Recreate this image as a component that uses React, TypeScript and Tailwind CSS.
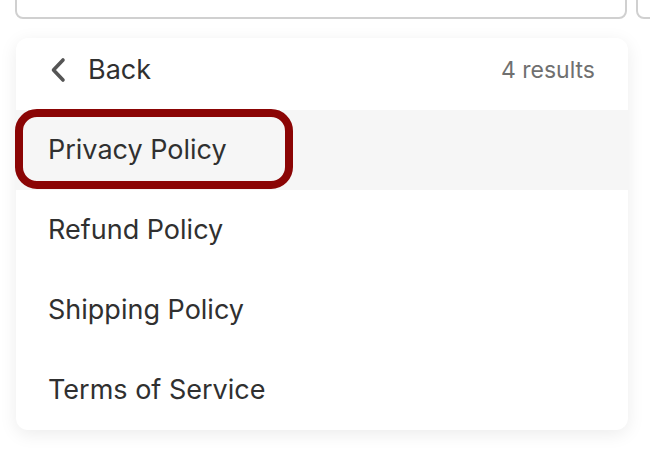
import React from "react";

const items = ["Privacy Policy", "Refund Policy", "Shipping Policy", "Terms of Service"];

export default function App() {
  return (
    <div className="w-[650px] h-[450px] overflow-hidden bg-white font-['Inter','Noto_Sans',sans-serif] text-[#303030]">
      {/* Search inputs, mostly scrolled out of view */}
      <div className="flex gap-[9px] pl-[15px] mt-[-32px]">
        <div className="w-[612px] h-[51px] shrink-0 rounded-[8px] border-2 border-[#d0d0d0] bg-white" />
        <div className="w-[60px] h-[51px] shrink-0 rounded-[8px] border-2 border-[#d0d0d0] bg-white" />
      </div>

      {/* Results dropdown */}
      <div className="ml-[16px] mr-[22px] mt-[19px] rounded-[12px] bg-white shadow-[0_4px_18px_rgba(0,0,0,0.08)]">
        <div className="flex h-[72px] items-center justify-between pb-[8px] pl-[33px] pr-[33px]">
          <div className="flex items-center gap-[21px]">
            <svg width="18" height="26" viewBox="0 0 18 26" fill="none" stroke="#555" strokeWidth="3.6" strokeLinecap="round" strokeLinejoin="round">
              <path d="M14 3 L4.5 13 L14 23" />
            </svg>
            <span className="text-[27px]">Back</span>
          </div>
          <span className="text-[23px] text-[#707070]">4 results</span>
        </div>

        {items.map((label, i) => (
          <div
            key={label}
            className={`relative flex h-[80px] items-center pl-[32px] text-[27px] ${i === 0 ? "bg-[#f6f6f6]" : ""} ${i === items.length - 1 ? "rounded-b-[12px]" : ""}`}
          >
            {label}
            {i === 0 && (
              <div className="absolute left-[-1px] top-[-1px] h-[80px] w-[278px] rounded-[22px] border-[8px] border-[#8b0505]" />
            )}
          </div>
        ))}
      </div>
    </div>
  );
}
